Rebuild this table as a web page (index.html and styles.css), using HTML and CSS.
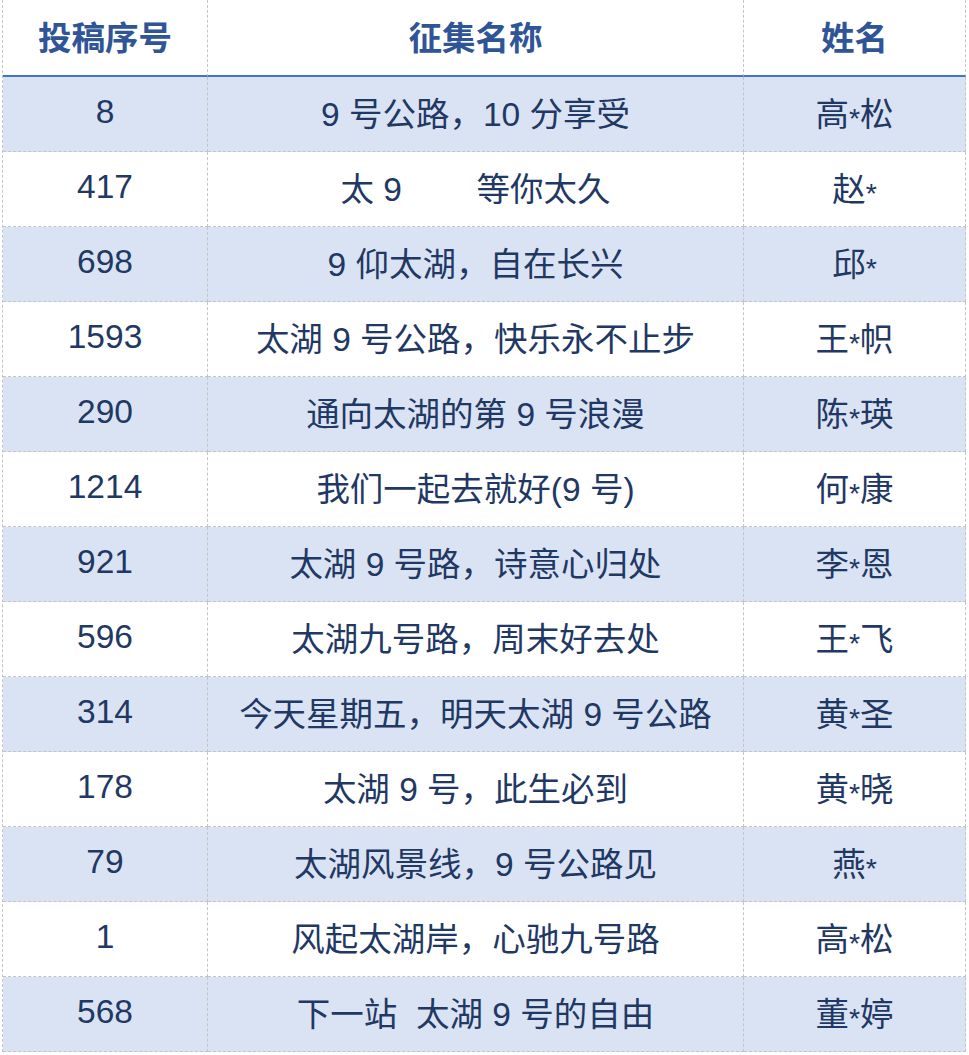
FILE: index.html
```html
<!DOCTYPE html>
<html lang="zh-CN">
<head>
<meta charset="utf-8">
<title>征集名称</title>
<link rel="stylesheet" href="styles.css">
</head>
<body>
<table class="list">
  <colgroup>
    <col class="c-no">
    <col class="c-title">
    <col class="c-name">
  </colgroup>
  <thead>
    <tr><th>投稿序号</th><th>征集名称</th><th>姓名</th></tr>
  </thead>
  <tbody>
    <tr class="alt"><td>8</td><td>9 号公路，10 分享受</td><td>高<span class="mask">*</span>松</td></tr>
    <tr><td>417</td><td>太 9        等你太久</td><td>赵<span class="mask">*</span></td></tr>
    <tr class="alt"><td>698</td><td>9 仰太湖，自在长兴</td><td>邱<span class="mask">*</span></td></tr>
    <tr><td>1593</td><td>太湖 9 号公路，快乐永不止步</td><td>王<span class="mask">*</span>帜</td></tr>
    <tr class="alt"><td>290</td><td>通向太湖的第 9 号浪漫</td><td>陈<span class="mask">*</span>瑛</td></tr>
    <tr><td>1214</td><td>我们一起去就好(9 号)</td><td>何<span class="mask">*</span>康</td></tr>
    <tr class="alt"><td>921</td><td>太湖 9 号路，诗意心归处</td><td>李<span class="mask">*</span>恩</td></tr>
    <tr><td>596</td><td>太湖九号路，周末好去处</td><td>王<span class="mask">*</span>飞</td></tr>
    <tr class="alt"><td>314</td><td>今天星期五，明天太湖 9 号公路</td><td>黄<span class="mask">*</span>圣</td></tr>
    <tr><td>178</td><td>太湖 9 号，此生必到</td><td>黄<span class="mask">*</span>晓</td></tr>
    <tr class="alt"><td>79</td><td>太湖风景线，9 号公路见</td><td>燕<span class="mask">*</span></td></tr>
    <tr><td>1</td><td>风起太湖岸，心驰九号路</td><td>高<span class="mask">*</span>松</td></tr>
    <tr class="alt"><td>568</td><td>下一站  太湖 9 号的自由</td><td>董<span class="mask">*</span>婷</td></tr>
  </tbody>
</table>
</body>
</html>
```

FILE: styles.css
```css
html, body {
  margin: 0;
  padding: 0;
  background: #ffffff;
}

body {
  padding-left: 2px;
  font-family: "Liberation Sans", "Noto Sans CJK SC", sans-serif;
}

.list {
  border-collapse: separate;
  border-spacing: 0;
  table-layout: fixed;
  width: 964px;
  border-left: 1px dashed #c4c4c4;
}

.c-no { width: 205px; }
.c-title { width: 536px; }
.c-name { width: 222px; }

.list th,
.list td {
  padding: 0 0 5px 0;
  text-align: center;
  vertical-align: middle;
  white-space: pre;
  border-right: 1px dashed #c4c4c4;
}

.list th {
  height: 70px;
  font-size: 33.5px;
  font-weight: bold;
  color: #2f5597;
  border-bottom: 2px solid #4472c4;
}

.list td {
  height: 69px;
  font-size: 33.5px;
  color: #1f3864;
  border-bottom: 1px dashed #c4c4c4;
}

.list tr.alt td {
  background: #dae3f3;
}

.mask {
  font-size: 0.85em;
  vertical-align: -0.06em;
}
```
